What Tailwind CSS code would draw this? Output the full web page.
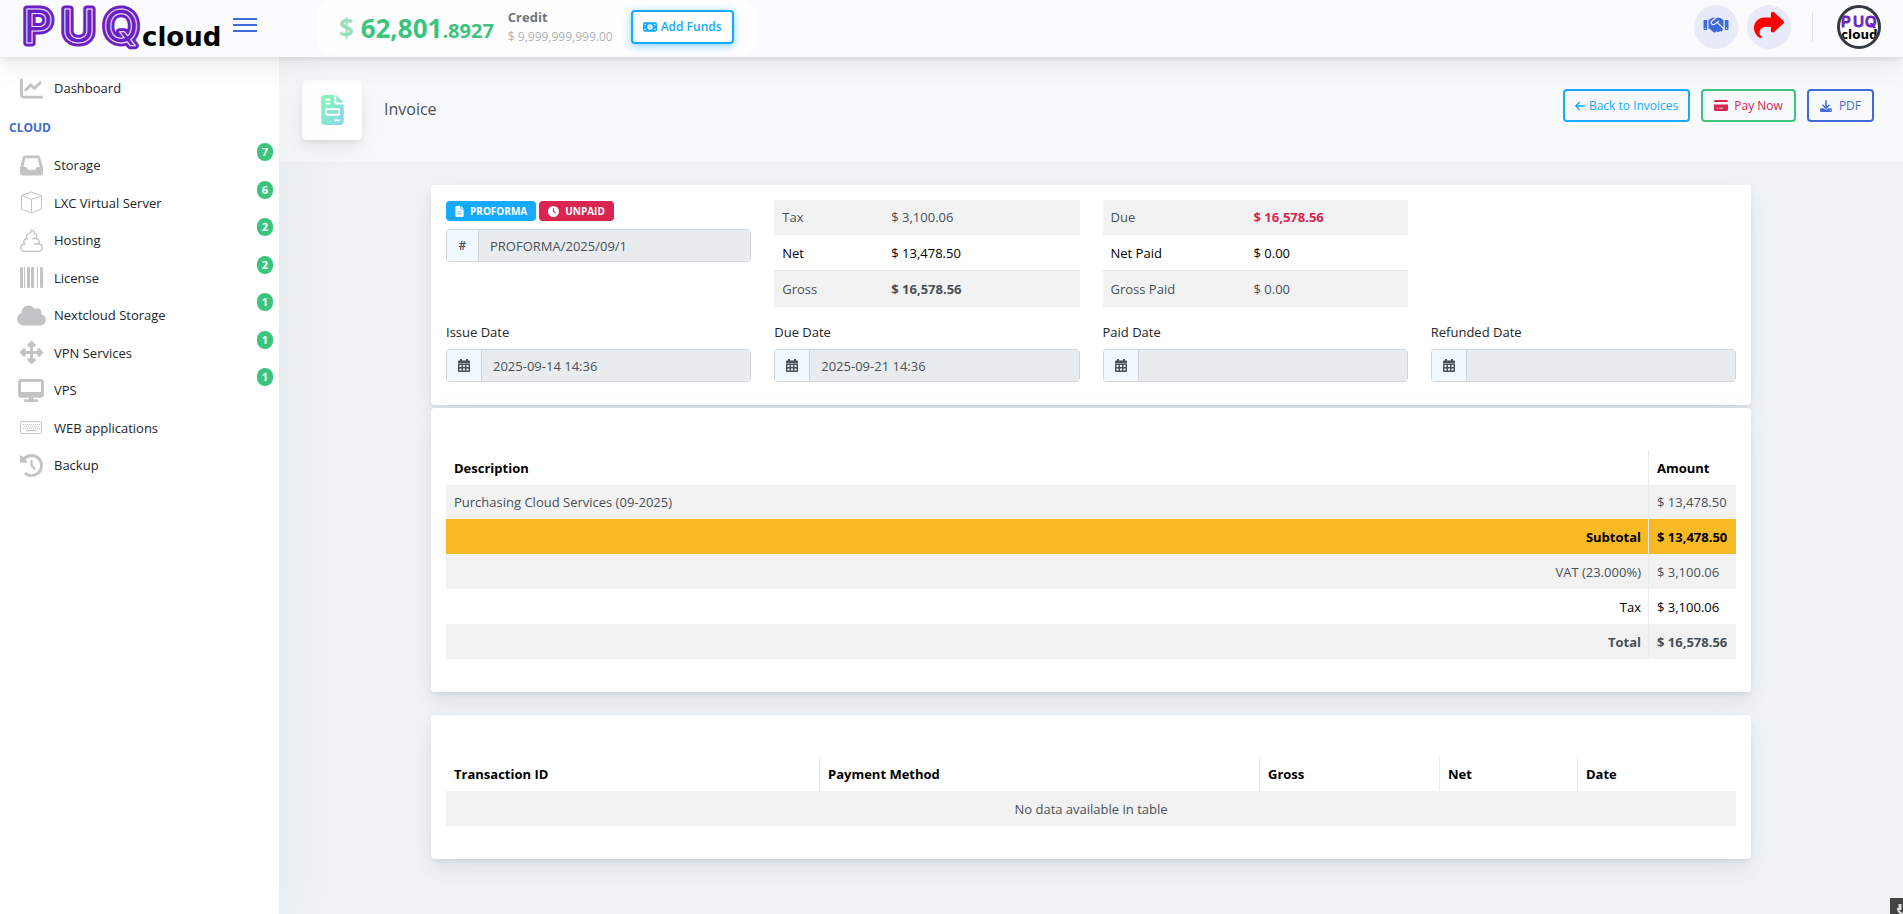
<!DOCTYPE html>
<html lang="en">
<head>
  <meta charset="UTF-8">
  <title>Invoice</title>
  <meta name="viewport" content="width=device-width, initial-scale=1.0">
  <script src="https://cdn.jsdelivr.net/npm/@tailwindcss/browser@4"></script>
</head>
<body class="min-h-screen flex flex-col bg-[#eff3f6] text-[#212529] text-[13px] leading-5 font-['Open_Sans',sans-serif] overflow-x-hidden">

  <!-- Header -->
  <header class="relative z-20 h-[57px] shrink-0 flex items-start bg-[#fafbfd] shadow-[0_7px_35px_rgba(4,9,20,0.03),0_15px_22px_rgba(4,9,20,0.03),0_4px_8px_rgba(4,9,20,0.05),0_2px_3px_rgba(4,9,20,0.03)]">
    <div class="w-[317px] h-full shrink-0 flex items-start pl-[23px] gap-3">
      <a href="#" aria-label="PUQcloud" class="block">
        <svg class="overflow-visible" width="198" height="52" viewBox="0 0 198 52" font-family="Inter">
          <g font-size="47" font-weight="500" stroke-linejoin="round">
            <text x="0 38 80" y="43" fill="#6a21c4" stroke="#6a21c4" stroke-width="7">PUQ</text>
            <text x="0 38 80" y="43" fill="#6a21c4" stroke="#efe6fa" stroke-width="1" aria-hidden="true">PUQ</text>
          </g>
          <text x="119" y="46" font-family="DejaVu Sans" font-weight="700" font-size="26" fill="#000">cloud</text>
        </svg>
      </a>
      <button type="button" aria-label="Toggle menu" class="mt-[18px] w-6 flex flex-col gap-1">
        <span class="h-[2px] w-full bg-[#3f6ad8]"></span>
        <span class="h-[2px] w-full bg-[#3f6ad8]"></span>
        <span class="h-[2px] w-full bg-[#3f6ad8]"></span>
      </button>
    </div>

    <!-- Balance -->
    <div class="h-[55px] flex items-start rounded-2xl bg-white/70 pl-[22px] pr-[22px]">
      <div class="pt-3 text-[#3ac47d] font-bold text-[26px] leading-8 whitespace-nowrap"><span class="opacity-50">$</span> 62,801<span class="text-[20px]">.8927</span></div>
      <div class="pt-2 ml-[14px]">
        <div class="font-bold text-[13px] leading-[19px] text-[#6c757d]">Credit</div>
        <div class="text-[12px] leading-5 text-[#adb1b5]">$ 9,999,999,999.00</div>
      </div>
      <button type="button" class="mt-[10px] ml-[18px] h-[34px] px-[10px] flex items-center gap-1 border-2 border-[#16aaff] rounded bg-white text-[#16aaff] text-[12px] font-semibold whitespace-nowrap shadow-[0_2px_8px_rgba(22,170,255,0.5)]">
        <svg width="14" height="10" viewBox="0 0 576 384" fill="currentColor"><path fill-rule="evenodd" d="M64 0C28 0 0 28 0 64V320c0 36 28 64 64 64H512c36 0 64-28 64-64V64c0-36-28-64-64-64H64zM64 64h64a64 64 0 0 1-64 64V64zm0 192a64 64 0 0 1 64 64H64V256zM512 64v64a64 64 0 0 1-64-64h64zM448 320a64 64 0 0 1 64-64v64H448zM288 80a112 112 0 1 1 0 224a112 112 0 1 1 0-224zM262 132v24h14v68h-18v24h60v-24h-16V132H262z"/></svg>
        Add Funds
      </button>
    </div>

    <div class="ml-auto mr-[22px] pt-[5px] flex items-center">
      <a href="#" aria-label="Partners" class="size-11 pb-1 rounded-full bg-[#e7ebf8] flex items-center justify-center text-[#3f6ad8]">
        <svg width="26" height="20" viewBox="0 0 640 512" fill="currentColor"><path d="M323.400 85.200l-96.800 78.400c-16.100 13-19.200 36.400-7 53.100c12.900 17.800 38 21.300 55.300 7.800l99.300-77.200c7-5.400 17-4.200 22.500 2.800s4.200 17-2.800 22.500l-20.900 16.200L512 316.800V128h-.7l-3.900-2.500L434.800 79c-15.300-9.800-33.200-15-51.400-15c-21.800 0-43 7.500-60 21.200zm22.800 124.400l-51.700 40.200C263 274.300 217.300 268 193.700 235.600c-22.200-30.500-16.600-73.100 12.700-96.800l83.200-67.300c-11.600-4.900-24.100-7.400-36.800-7.400C234 64 215.700 69.600 200 80l-72 48V352h28.200l91.400 83.400c19.600 17.900 49.900 16.500 67.800-3.100c5.500-6.100 9.200-13.200 11.100-20.600l17 15.600c19.500 17.900 49.900 16.600 67.800-2.900c4.500-4.900 7.800-10.600 9.900-16.500c19.400 13 45.800 10.300 62.100-7.500c17.900-19.500 16.600-49.900-2.900-67.800l-134.200-123zM16 128c-8.800 0-16 7.200-16 16V352c0 17.700 14.300 32 32 32H64c17.700 0 32-14.300 32-32V128H16zM48 320a16 16 0 1 1 0 32 16 16 0 1 1 0-32zM544 128V352c0 17.700 14.300 32 32 32h32c17.700 0 32-14.300 32-32V144c0-8.800-7.200-16-16-16H544zm32 208a16 16 0 1 1 32 0 16 16 0 1 1-32 0z"/></svg>
      </a>
      <a href="#" aria-label="Share" class="ml-[9px] size-11 pb-1 rounded-full bg-[#e7ebf8] flex items-center justify-center text-[#ff0000]">
        <svg width="30" height="30" viewBox="0 0 512 512" fill="currentColor"><path d="M307 34.800c-11.500 5.100-19 16.600-19 29.200v64H176C78.800 128 0 206.800 0 304C0 417.300 81.500 467.900 100.200 478.100c2.500 1.400 5.300 1.900 8.100 1.900c10.900 0 19.700-8.900 19.700-19.700c0-7.500-4.300-14.400-9.800-19.500C108.800 431.900 96 414.400 96 384c0-53 43-96 96-96h96v64c0 12.600 7.400 24.100 19 29.200s25 3 34.400-5.400l160-144c6.700-6.100 10.600-14.700 10.600-23.800s-3.800-17.700-10.600-23.800l-160-144c-9.400-8.500-22.900-10.600-34.400-5.400z"/></svg>
      </a>
      <span class="ml-[21px] w-px h-[30px] bg-[#dee2e6]"></span>
      <a href="#" aria-label="Account" class="ml-6 size-11 rounded-full border-[3px] border-[#343a40] bg-white overflow-hidden">
        <svg width="38" height="38" viewBox="0 0 38 38" font-family="Inter">
          <text x="1 13 25" y="19" font-size="15" font-weight="500" stroke-linejoin="round" fill="#6a21c4" stroke="#6a21c4" stroke-width="1">PUQ</text>
          <text x="1" y="31" font-family="DejaVu Sans" font-weight="700" font-size="12" fill="#000">cloud</text>
        </svg>
      </a>
    </div>
  </header>

  <div class="flex flex-1">

    <!-- Sidebar -->
    <aside class="relative z-10 w-[279px] shrink-0 bg-white shadow-[7px_0_60px_rgba(0,0,0,0.05)] pt-[13px]">
      <nav>
        <a href="#" class="h-9 flex items-center">
          <span class="w-[54px] pl-2 flex justify-center text-[#c1c3c5]"><svg width="23" height="23" viewBox="0 0 512 512" fill="currentColor"><path d="M64 64c0-17.700-14.300-32-32-32S0 46.300 0 64V400c0 44.200 35.800 80 80 80H480c17.700 0 32-14.300 32-32s-14.300-32-32-32H80c-8.800 0-16-7.200-16-16V64zm406.600 86.600c12.500-12.500 12.500-32.800 0-45.300s-32.800-12.500-45.300 0L320 210.700l-57.400-57.400c-12.500-12.500-32.800-12.500-45.300 0l-112 112c-12.500 12.500-12.500 32.800 0 45.300s32.800 12.500 45.300 0L240 221.300l57.400 57.400c12.500 12.500 32.800 12.500 45.300 0l128-128z"/></svg></span>
          Dashboard
        </a>
        <h5 class="pl-[9px] mt-3 text-[12px] font-bold text-[#3f6ad8]">CLOUD</h5>
        <ul class="mt-[9px] h-[336px] flex flex-col justify-between">
          <li class="relative">
            <a href="#" class="h-9 flex items-center">
              <span class="w-[54px] pl-2 flex justify-center text-[#c1c3c5]"><svg width="23" height="23" viewBox="0 0 512 512" fill="currentColor"><path d="M121 32C91.600 32 66 52 58.900 80.500L1.900 308.400C.6 313.500 0 318.700 0 323.900V416c0 35.300 28.700 64 64 64H448c35.300 0 64-28.700 64-64V323.900c0-5.200-.6-10.400-1.900-15.500l-57-227.900C446 52 420.400 32 391 32H121zm0 64H391l48 192H387.800c-12.100 0-23.200 6.800-28.600 17.700l-14.300 28.600c-5.400 10.800-16.500 17.700-28.600 17.700H195.800c-12.100 0-23.200-6.800-28.600-17.700l-14.300-28.600c-5.400-10.800-16.500-17.700-28.600-17.700H73L121 96z"/></svg></span>
              Storage
            </a>
            <span class="absolute right-[6px] -top-1 w-4 h-[18px] rounded-full bg-[#3ac47d] text-white text-[11px] leading-[18px] font-bold text-center">7</span>
          </li>
          <li class="relative">
            <a href="#" class="h-9 flex items-center">
              <span class="w-[54px] pl-2 flex justify-center text-[#c1c3c5]"><svg width="23" height="23" viewBox="0 0 23 23" fill="none" stroke="currentColor" stroke-linejoin="round"><path d="M11.500 1L21.500 4.500V18L11.500 22L1.500 18V4.500zM1.500 4.500L11.500 8.500L21.500 4.500M11.500 8.500V22"/></svg></span>
              LXC Virtual Server
            </a>
            <span class="absolute right-[6px] -top-1 w-4 h-[18px] rounded-full bg-[#3ac47d] text-white text-[11px] leading-[18px] font-bold text-center">6</span>
          </li>
          <li class="relative">
            <a href="#" class="h-9 flex items-center">
              <span class="w-[54px] pl-2 flex justify-center text-[#c1c3c5]"><svg width="23" height="23" viewBox="0 0 23 23" fill="none" stroke="currentColor" stroke-linejoin="round" stroke-linecap="round"><path stroke-width="1.300" d="M11 1C11.500 3 10.500 4 9 4.500C6 5.500 5.500 8 7.500 9.500C4 9.500 2.500 13 5 15C2 15 .8 17 .8 18.800C.8 21 2.800 22.300 5 22.300H18C20.300 22.300 22.200 21 22.200 18.800C22.200 17 21 15 18 15C20.500 13 19 9.500 15.500 9.500C17.500 8 17 5 14.500 4.500C14.500 2.500 13 1.200 11 1M15.500 9.500H12.500M18 15H14.500"/></svg></span>
              Hosting
            </a>
            <span class="absolute right-[6px] -top-1 w-4 h-[18px] rounded-full bg-[#3ac47d] text-white text-[11px] leading-[18px] font-bold text-center">2</span>
          </li>
          <li class="relative">
            <a href="#" class="h-9 flex items-center">
              <span class="w-[54px] pl-2 flex justify-center text-[#c1c3c5]"><svg width="23" height="21" viewBox="0 0 23 21" fill="currentColor"><rect width="3" height="21" rx="1"/><rect x="4" width="1" height="21"/><rect x="7" width="3" height="21" rx="1"/><rect x="11" width="3" height="21" rx="1"/><rect x="17" width="1" height="21"/><rect x="20" width="3" height="21" rx="1"/></svg></span>
              License
            </a>
            <span class="absolute right-[6px] -top-1 w-4 h-[18px] rounded-full bg-[#3ac47d] text-white text-[11px] leading-[18px] font-bold text-center">2</span>
          </li>
          <li class="relative">
            <a href="#" class="h-9 flex items-center">
              <span class="w-[54px] pl-2 flex justify-center text-[#c1c3c5]"><svg width="29" height="23" viewBox="0 0 640 512" fill="currentColor"><path d="M0 336c0 79.500 64.500 144 144 144H512c70.700 0 128-57.300 128-128c0-61.900-44-113.600-102.400-125.400c4.100-10.700 6.400-22.400 6.400-34.600c0-53-43-96-96-96c-19.700 0-38.100 6-53.300 16.200C367 64.200 315.300 32 256 32C167.600 32 96 103.600 96 192c0 2.700 .1 5.400 .2 8.100C40.200 219.800 0 273.200 0 336z"/></svg></span>
              Nextcloud Storage
            </a>
            <span class="absolute right-[6px] -top-1 w-4 h-[18px] rounded-full bg-[#3ac47d] text-white text-[11px] leading-[18px] font-bold text-center">1</span>
          </li>
          <li class="relative">
            <a href="#" class="h-9 flex items-center">
              <span class="w-[54px] pl-2 flex justify-center text-[#c1c3c5]"><svg width="23" height="23" viewBox="0 0 512 512" fill="currentColor"><path d="M278.600 9.400c-12.500-12.500-32.800-12.500-45.300 0l-64 64c-9.200 9.200-11.900 22.900-6.900 34.900s16.600 19.800 29.600 19.800h32v96H128V192c0-12.900-7.800-24.600-19.800-29.600s-25.700-2.200-34.900 6.900l-64 64c-12.500 12.500-12.500 32.800 0 45.300l64 64c9.200 9.200 22.900 11.900 34.900 6.900s19.800-16.600 19.800-29.600V288h96v96H192c-12.900 0-24.600 7.800-29.600 19.800s-2.200 25.700 6.900 34.900l64 64c12.500 12.500 32.800 12.500 45.300 0l64-64c9.200-9.200 11.900-22.900 6.900-34.900s-16.600-19.800-29.600-19.800H288V288h96v32c0 12.900 7.800 24.600 19.800 29.600s25.700 2.200 34.900-6.900l64-64c12.500-12.500 12.500-32.800 0-45.300l-64-64c-9.200-9.200-22.900-11.900-34.900-6.900s-19.800 16.600-19.800 29.600v32H288V128h32c12.900 0 24.600-7.800 29.600-19.800s2.200-25.700-6.900-34.900l-64-64z"/></svg></span>
              VPN Services
            </a>
            <span class="absolute right-[6px] -top-1 w-4 h-[18px] rounded-full bg-[#3ac47d] text-white text-[11px] leading-[18px] font-bold text-center">1</span>
          </li>
          <li class="relative">
            <a href="#" class="h-9 flex items-center">
              <span class="w-[54px] pl-2 flex justify-center text-[#c1c3c5]"><svg width="26" height="23" viewBox="0 0 576 512" fill="currentColor"><path d="M64 0C28.700 0 0 28.700 0 64V352c0 35.300 28.700 64 64 64H240l-10.700 32H160c-17.700 0-32 14.300-32 32s14.300 32 32 32H416c17.700 0 32-14.300 32-32s-14.300-32-32-32H346.700L336 416H512c35.300 0 64-28.700 64-64V64c0-35.300-28.700-64-64-64H64zM512 64V288H64V64H512z"/></svg></span>
              VPS
            </a>
            <span class="absolute right-[6px] -top-1 w-4 h-[18px] rounded-full bg-[#3ac47d] text-white text-[11px] leading-[18px] font-bold text-center">1</span>
          </li>
          <li>
            <a href="#" class="h-9 flex items-center">
              <span class="w-[54px] pl-2 flex justify-center text-[#c1c3c5]"><svg width="23" height="13" viewBox="0 0 23 13" fill="none" stroke="currentColor"><rect x=".5" y=".5" width="21" height="12" rx="1"/><path stroke-dasharray="1 1" d="M3 3.500H20M4 5.500H20M3 7.500H20"/><path d="M6 9.500H17"/></svg></span>
              WEB applications
            </a>
          </li>
          <li>
            <a href="#" class="h-9 flex items-center">
              <span class="w-[54px] pl-2 flex justify-center text-[#c1c3c5]"><svg width="23" height="23" viewBox="0 0 512 512" fill="currentColor"><path d="M75 75L41 41C25.900 25.900 0 36.600 0 57.900V168c0 13.300 10.700 24 24 24H134.100c21.400 0 32.100-25.900 17-41l-30.800-30.800C155 85.500 203 64 256 64c106 0 192 86 192 192s-86 192-192 192c-40.800 0-78.600-12.700-109.700-34.400c-14.500-10.100-34.400-6.600-44.600 7.900s-6.600 34.400 7.900 44.600C151.200 495 201.700 512 256 512c141.400 0 256-114.600 256-256S397.400 0 256 0C185.300 0 121.300 28.700 75 75zm181 53c-13.300 0-24 10.700-24 24V256c0 6.400 2.500 12.500 7 17l72 72c9.400 9.400 24.600 9.400 33.900 0s9.400-24.600 0-33.900l-65-65V152c0-13.300-10.700-24-24-24z"/></svg></span>
              Backup
            </a>
          </li>
        </ul>
      </nav>
    </aside>

    <main class="flex-1 min-w-0">

      <!-- Page title -->
      <div class="h-[105px] pl-[23px] pr-[29px] flex items-start bg-[#f8f9fb]">
        <div class="mt-[23px] size-[60px] rounded bg-white flex items-center justify-center shadow-[0_7px_35px_rgba(4,9,20,0.03),0_15px_22px_rgba(4,9,20,0.03),0_4px_8px_rgba(4,9,20,0.05),0_2px_3px_rgba(4,9,20,0.03)]">
          <svg width="23" height="30" viewBox="0 0 384 512">
            <defs><linearGradient id="mint" x1="0" y1="0" x2="1" y2="1"><stop offset="0" stop-color="#84fab0"/><stop offset="1" stop-color="#8fd3f4"/></linearGradient></defs>
            <path fill="url(#mint)" fill-rule="evenodd" d="M64 0C28.700 0 0 28.700 0 64V448c0 35.300 28.700 64 64 64H320c35.300 0 64-28.700 64-64V160H256c-17.700 0-32-14.300-32-32V0H64zM256 0V128H384L256 0zM80 64h64c8.800 0 16 7.200 16 16s-7.200 16-16 16H80c-8.800 0-16-7.200-16-16s7.200-16 16-16zm0 64h64c8.800 0 16 7.200 16 16s-7.200 16-16 16H80c-8.800 0-16-7.200-16-16s7.200-16 16-16zm16 96H288c17.700 0 32 14.300 32 32v64c0 17.700-14.300 32-32 32H96c-17.700 0-32-14.300-32-32V256c0-17.700 14.300-32 32-32zm0 32v64H288V256H96zM240 416h64c8.800 0 16 7.200 16 16s-7.200 16-16 16H240c-8.800 0-16-7.200-16-16s7.200-16 16-16z"/>
          </svg>
        </div>
        <h1 class="mt-10 ml-[22px] text-[16px] leading-6 text-[#495057]">Invoice</h1>
        <div class="mt-8 ml-auto flex gap-[11px] text-[12px] font-medium whitespace-nowrap">
          <a href="#" class="h-[33px] px-[10px] flex items-center gap-1 border-2 border-[#16aaff] rounded text-[#16aaff]">
            <svg width="10" height="12" viewBox="0 0 448 512" fill="currentColor"><path d="M9.400 233.400c-12.500 12.500-12.500 32.800 0 45.300l160 160c12.500 12.500 32.800 12.500 45.300 0s12.500-32.800 0-45.300L109.200 288 416 288c17.700 0 32-14.300 32-32s-14.300-32-32-32l-306.700 0L214.600 118.600c12.500-12.500 12.500-32.800 0-45.300s-32.800-12.500-45.300 0l-160 160z"/></svg>
            Back to Invoices
          </a>
          <button type="button" class="h-[33px] px-[11px] flex items-center gap-[6px] border-2 border-[#3ac47d] rounded text-[#d92550]">
            <svg width="14" height="11" viewBox="0 0 14 11" fill="currentColor"><path fill-rule="evenodd" d="M1.500 0H12.500A1.500 1.500 0 0 1 14 1.500V2H0V1.500A1.500 1.500 0 0 1 1.500 0zM0 4.500H14V9.500A1.500 1.500 0 0 1 12.500 11H1.500A1.500 1.500 0 0 1 0 9.500zM2.500 7.700V8.500H4.500V7.700zM5.500 7.700V8.500H9V7.700z"/></svg>
            Pay Now
          </button>
          <button type="button" class="h-[33px] px-[11px] flex items-center gap-[7px] border-2 border-[#3f6ad8] rounded text-[#3f6ad8]">
            <svg width="12" height="12" viewBox="0 0 512 512" fill="currentColor"><path d="M288 32c0-17.700-14.300-32-32-32s-32 14.300-32 32V274.700l-73.400-73.400c-12.500-12.500-32.800-12.500-45.300 0s-12.500 32.800 0 45.300l128 128c12.500 12.500 32.800 12.500 45.300 0l128-128c12.500-12.500 12.500-32.800 0-45.300s-32.800-12.500-45.300 0L288 274.700V32zM64 352c-35.300 0-64 28.700-64 64v32c0 35.300 28.700 64 64 64H448c35.300 0 64-28.700 64-64V416c0-35.300-28.700-64-64-64H346.500l-45.300 45.300c-25 25-65.500 25-90.500 0L165.500 352H64zm368 56a24 24 0 1 1 0 48 24 24 0 1 1 0-48z"/></svg>
            PDF
          </button>
        </div>
      </div>

      <div class="max-w-[1320px] mx-auto pt-[23px] pb-8">

        <!-- Invoice details -->
        <section class="mb-[3px] px-[15px] pt-[15px] pb-[23px] rounded bg-white shadow-[0_7px_35px_rgba(4,9,20,0.03),0_15px_22px_rgba(4,9,20,0.03),0_4px_8px_rgba(4,9,20,0.05),0_2px_3px_rgba(4,9,20,0.03)]">
          <div class="grid grid-cols-4 gap-x-[23px]">
            <div>
              <div class="mt-px flex gap-[3px] text-white text-[10px] font-bold">
                <span class="h-5 px-[9px] flex items-center gap-[6px] rounded bg-[#16aaff]">
                  <svg width="9" height="11" viewBox="0 0 384 512" fill="currentColor"><path fill-rule="evenodd" d="M64 0C28.700 0 0 28.700 0 64V448c0 35.300 28.700 64 64 64H320c35.300 0 64-28.700 64-64V160H256c-17.700 0-32-14.300-32-32V0H64zM256 0V128H384L256 0zM112 256H272c8.800 0 16 7.200 16 16s-7.200 16-16 16H112c-8.800 0-16-7.200-16-16s7.200-16 16-16zm0 96H272c8.800 0 16 7.200 16 16s-7.200 16-16 16H112c-8.800 0-16-7.200-16-16s7.200-16 16-16z"/></svg>
                  PROFORMA
                </span>
                <span class="h-5 px-[9px] flex items-center gap-[6px] rounded bg-[#d92550]">
                  <svg width="11" height="11" viewBox="0 0 512 512" fill="currentColor"><path fill-rule="evenodd" d="M256 0a256 256 0 1 1 0 512A256 256 0 1 1 256 0zM232 120V256c0 8 4 15.500 10.700 20l96 64c11 7.400 25.900 4.400 33.300-6.700s4.400-25.900-6.700-33.300L280 243.200V120c0-13.300-10.700-24-24-24s-24 10.700-24 24z"/></svg>
                  UNPAID
                </span>
              </div>
              <div class="mt-2 h-[33px] flex border border-[#ced4da] rounded overflow-hidden">
                <label for="number" class="w-8 flex items-center justify-center border-r border-[#ced4da] bg-[#eff9ff] text-[#495057] font-semibold text-[12px]">#</label>
                <input id="number" type="text" value="PROFORMA/2025/09/1" readonly class="flex-1 min-w-0 px-[11px] bg-[#e9ecef] text-[#495057]">
              </div>
            </div>
            <table class="w-full h-[107px] table-fixed text-left">
              <tbody>
                <tr class="border-b border-[#e9ecef] bg-[#f2f2f2] text-[#495057]"><td class="w-[109px] pl-2">Tax</td><td class="pl-2">$ 3,100.06</td></tr>
                <tr class="border-b border-[#e9ecef] text-black"><td class="pl-2">Net</td><td class="pl-2">$ 13,478.50</td></tr>
                <tr class="border-b border-[#e9ecef] bg-[#f2f2f2] text-[#495057]"><td class="pl-2">Gross</td><td class="pl-2 font-bold">$ 16,578.56</td></tr>
              </tbody>
            </table>
            <table class="w-full h-[107px] table-fixed text-left">
              <tbody>
                <tr class="border-b border-[#e9ecef] bg-[#f2f2f2] text-[#495057]"><td class="w-[143px] pl-2">Due</td><td class="pl-2 font-bold text-[#d92550]">$ 16,578.56</td></tr>
                <tr class="border-b border-[#e9ecef] text-black"><td class="pl-2">Net Paid</td><td class="pl-2">$ 0.00</td></tr>
                <tr class="border-b border-[#e9ecef] bg-[#f2f2f2] text-[#495057]"><td class="pl-2">Gross Paid</td><td class="pl-2">$ 0.00</td></tr>
              </tbody>
            </table>
          </div>

          <div class="mt-[15px] grid grid-cols-4 gap-x-[23px]">
            <div>
              <label for="issued" class="block">Issue Date</label>
              <div class="mt-[7px] h-[33px] flex border border-[#ced4da] rounded overflow-hidden">
                <span class="w-[35px] flex items-center justify-center border-r border-[#ced4da] bg-[#eff9ff] text-[#495057]"><svg width="12" height="13" viewBox="0 0 12 13" fill="currentColor"><path fill-rule="evenodd" d="M2 0H4V1.500H8V0H10V1.500H11A1 1 0 0 1 12 2.500V4H0V2.500A1 1 0 0 1 1 1.500H2zM0 4.500H12V12A1 1 0 0 1 11 13H1A1 1 0 0 1 0 12zM1.500 6V8H3.500V6zM5 6V8H7V6zM8.500 6V8H10.500V6zM1.500 9.500V11.500H3.500V9.500zM5 9.500V11.500H7V9.500zM8.500 9.500V11.500H10.500V9.500z"/></svg></span>
                <input id="issued" type="text" value="2025-09-14 14:36" readonly class="flex-1 min-w-0 px-[11px] bg-[#e9ecef] text-[#495057]">
              </div>
            </div>
            <div>
              <label for="due" class="block">Due Date</label>
              <div class="mt-[7px] h-[33px] flex border border-[#ced4da] rounded overflow-hidden">
                <span class="w-[35px] flex items-center justify-center border-r border-[#ced4da] bg-[#eff9ff] text-[#495057]"><svg width="12" height="13" viewBox="0 0 12 13" fill="currentColor"><path fill-rule="evenodd" d="M2 0H4V1.500H8V0H10V1.500H11A1 1 0 0 1 12 2.500V4H0V2.500A1 1 0 0 1 1 1.500H2zM0 4.500H12V12A1 1 0 0 1 11 13H1A1 1 0 0 1 0 12zM1.500 6V8H3.500V6zM5 6V8H7V6zM8.500 6V8H10.500V6zM1.500 9.500V11.500H3.500V9.500zM5 9.500V11.500H7V9.500zM8.500 9.500V11.500H10.500V9.500z"/></svg></span>
                <input id="due" type="text" value="2025-09-21 14:36" readonly class="flex-1 min-w-0 px-[11px] bg-[#e9ecef] text-[#495057]">
              </div>
            </div>
            <div>
              <label for="paid" class="block">Paid Date</label>
              <div class="mt-[7px] h-[33px] flex border border-[#ced4da] rounded overflow-hidden">
                <span class="w-[35px] flex items-center justify-center border-r border-[#ced4da] bg-[#eff9ff] text-[#495057]"><svg width="12" height="13" viewBox="0 0 12 13" fill="currentColor"><path fill-rule="evenodd" d="M2 0H4V1.500H8V0H10V1.500H11A1 1 0 0 1 12 2.500V4H0V2.500A1 1 0 0 1 1 1.500H2zM0 4.500H12V12A1 1 0 0 1 11 13H1A1 1 0 0 1 0 12zM1.500 6V8H3.500V6zM5 6V8H7V6zM8.500 6V8H10.500V6zM1.500 9.500V11.500H3.500V9.500zM5 9.500V11.500H7V9.500zM8.500 9.500V11.500H10.500V9.500z"/></svg></span>
                <input id="paid" type="text" readonly class="flex-1 min-w-0 px-[11px] bg-[#e9ecef] text-[#495057]">
              </div>
            </div>
            <div>
              <label for="refunded" class="block">Refunded Date</label>
              <div class="mt-[7px] h-[33px] flex border border-[#ced4da] rounded overflow-hidden">
                <span class="w-[35px] flex items-center justify-center border-r border-[#ced4da] bg-[#eff9ff] text-[#495057]"><svg width="12" height="13" viewBox="0 0 12 13" fill="currentColor"><path fill-rule="evenodd" d="M2 0H4V1.500H8V0H10V1.500H11A1 1 0 0 1 12 2.500V4H0V2.500A1 1 0 0 1 1 1.500H2zM0 4.500H12V12A1 1 0 0 1 11 13H1A1 1 0 0 1 0 12zM1.500 6V8H3.500V6zM5 6V8H7V6zM8.500 6V8H10.500V6zM1.500 9.500V11.500H3.500V9.500zM5 9.500V11.500H7V9.500zM8.500 9.500V11.500H10.500V9.500z"/></svg></span>
                <input id="refunded" type="text" readonly class="flex-1 min-w-0 px-[11px] bg-[#e9ecef] text-[#495057]">
              </div>
            </div>
          </div>
        </section>

        <!-- Items -->
        <section class="mb-[23px] px-[15px] pt-[42px] pb-[33px] rounded bg-white shadow-[0_7px_35px_rgba(4,9,20,0.03),0_15px_22px_rgba(4,9,20,0.03),0_4px_8px_rgba(4,9,20,0.05),0_2px_3px_rgba(4,9,20,0.03)]">
          <table class="w-full table-fixed border-separate border-spacing-0">
            <thead>
              <tr class="h-[35px] text-left text-black">
                <th class="px-2 font-bold">Description</th>
                <th class="w-[88px] pl-2 font-bold border-l border-[#e9ecef]">Amount</th>
              </tr>
            </thead>
            <tbody>
              <tr class="h-[34px] bg-[#f2f2f2] text-[#495057]"><td class="px-2">Purchasing Cloud Services (09-2025)</td><td class="pl-2 border-l border-[#e9ecef]">$ 13,478.50</td></tr>
              <tr class="h-[35px] bg-[#f7b924] text-black font-bold"><td class="px-[7px] text-right">Subtotal</td><td class="pl-2 border-l border-[#e9ecef]">$ 13,478.50</td></tr>
              <tr class="h-[35px] bg-[#f2f2f2] text-[#495057]"><td class="px-[7px] text-right">VAT (23.000%)</td><td class="pl-2 border-l border-[#e9ecef]">$ 3,100.06</td></tr>
              <tr class="h-[35px] text-black"><td class="px-[7px] text-right">Tax</td><td class="pl-2 border-l border-[#e9ecef]">$ 3,100.06</td></tr>
              <tr class="h-[35px] bg-[#f2f2f2] text-[#495057] font-bold"><td class="px-[7px] text-right">Total</td><td class="pl-2 border-l border-[#e9ecef]">$ 16,578.56</td></tr>
            </tbody>
          </table>
        </section>

        <!-- Transactions -->
        <section class="px-[15px] pt-[41px] pb-[33px] rounded bg-white shadow-[0_7px_35px_rgba(4,9,20,0.03),0_15px_22px_rgba(4,9,20,0.03),0_4px_8px_rgba(4,9,20,0.05),0_2px_3px_rgba(4,9,20,0.03)]">
          <table class="w-full table-fixed border-separate border-spacing-0">
            <thead>
              <tr class="h-[35px] text-left text-black">
                <th class="w-[373px] px-2 font-bold">Transaction ID</th>
                <th class="w-[440px] px-2 font-bold border-l border-[#e9ecef]">Payment Method</th>
                <th class="w-[180px] px-2 font-bold border-l border-[#e9ecef]">Gross</th>
                <th class="w-[138px] px-2 font-bold border-l border-[#e9ecef]">Net</th>
                <th class="px-2 font-bold border-l border-[#e9ecef]">Date</th>
              </tr>
            </thead>
            <tbody>
              <tr class="h-[35px] bg-[#f2f2f2] text-[#495057] text-center"><td colspan="5">No data available in table</td></tr>
            </tbody>
          </table>
        </section>
      </div>
    </main>
  </div>

  <!-- Debug bar toggle -->
  <button type="button" aria-label="Open debug bar" class="fixed z-30 right-0 bottom-0 w-[13px] h-4 bg-[#444] overflow-hidden">
    <svg width="13" height="16" viewBox="0 0 13 16" fill="none" stroke="#ddd" stroke-width="2"><path d="M8 10C8 13 9 15 13 16"/><path d="M10 6V12" stroke-width="3"/></svg>
  </button>

</body>
</html>
